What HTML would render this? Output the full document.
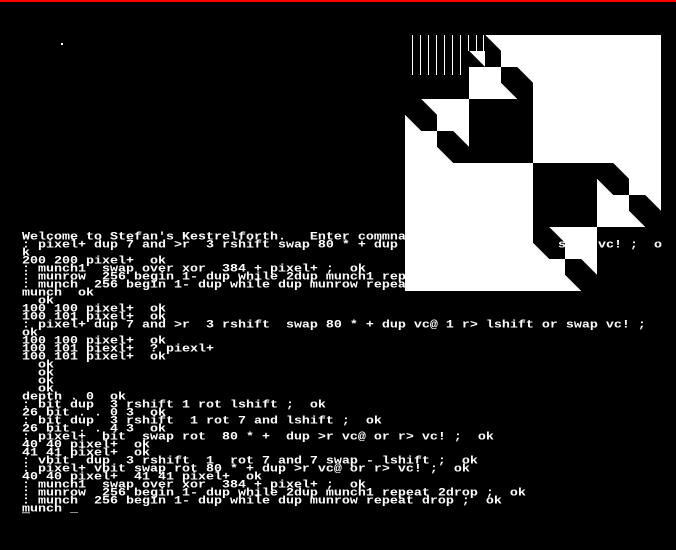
<!DOCTYPE html>
<html><head><meta charset="utf-8"><style>
html,body{margin:0;padding:0;background:#000;width:676px;height:550px;overflow:hidden;position:relative}
#red{position:absolute;left:0;top:0;width:676px;height:2px;background:#f00}
#t,.ov{position:absolute;margin:0;color:#fff;font-family:"Liberation Mono",monospace;font-weight:bold;font-size:13.33px;line-height:10px;letter-spacing:0;white-space:pre;transform:scaleY(0.8);transform-origin:0 0}
#t{left:22px;top:234px}
svg{position:absolute}
</style></head><body>
<div id="red"></div>
<div style="position:absolute;left:61px;top:43px;width:2px;height:2px;background:#fff"></div>
<pre id="t">Welcome to Stefan's Kestrelforth.   Enter commna
: pixel+ dup 7 and >r  3 rshift swap 80 * + dup
k
200 200 pixel+  ok
: munch1  swap over xor  384 + pixel+ ;  ok
: munrow  256 begin 1- dup while 2dup munch1 rep
: munch  256 begin 1- dup while dup munrow repea
munch  ok
  ok
100 100 pixel+  ok
100 101 pixel+  ok
: pixel+ dup 7 and >r  3 rshift  swap 80 * + dup vc@ 1 r> lshift or swap vc! ;
ok
100 100 pixel+  ok
100 101 piexl+  ? piexl+
100 101 pixel+  ok
  ok
  ok
  ok
  ok
depth . 0  ok
: bit dup  3 rshift 1 rot lshift ;  ok
26 bit . . 0 3  ok
: bit dup  3 rshift  1 rot 7 and lshift ;  ok
26 bit . . 4 3  ok
: pixel+  bit  swap rot  80 * +  dup >r vc@ or r> vc! ;  ok
40 40 pixel+  ok
41 41 pixel+  ok
: vbit  dup  3 rshift  1  rot 7 and 7 swap - lshift ;  ok
: pixel+ vbit swap rot 80 * + dup >r vc@ or r> vc! ;  ok
40 40 pixel+  41 41 pixel+  ok
: munch1  swap over xor  384 + pixel+ ;  ok
: munrow  256 begin 1- dup while 2dup munch1 repeat 2drop ;  ok
: munch  256 begin 1- dup while dup munrow repeat drop ;  ok
<u>m</u>unch _</pre>
<svg style="left:405px;top:35px" width="256" height="256" viewBox="0 0 16 16" shape-rendering="crispEdges">
<rect x="0" y="0" width="16" height="16" fill="#000"/>
<g fill="#fff">
<rect x="6" y="0" width="10" height="2"/>
<rect x="4" y="2" width="2" height="2"/><rect x="8" y="2" width="8" height="6"/>
<rect x="2" y="4" width="2" height="2"/>
<rect x="0" y="6" width="2" height="2"/>
<rect x="0" y="8" width="8" height="8"/>
<rect x="14" y="8" width="2" height="2"/>
<rect x="12" y="10" width="2" height="2"/>
<rect x="10" y="12" width="2" height="2"/>
<rect x="8" y="14" width="2" height="2"/>
<rect x="5" y="0" width="1" height="1"/><rect x="4" y="1" width="1" height="1"/>
<rect x="7" y="2" width="1" height="1"/><rect x="6" y="3" width="1" height="1"/>
<rect x="1" y="4" width="1" height="1"/><rect x="0" y="5" width="1" height="1"/>
<rect x="3" y="6" width="1" height="1"/><rect x="2" y="7" width="1" height="1"/>
<rect x="13" y="8" width="1" height="1"/><rect x="12" y="9" width="1" height="1"/>
<rect x="15" y="10" width="1" height="1"/><rect x="14" y="11" width="1" height="1"/>
<rect x="9" y="12" width="1" height="1"/><rect x="8" y="13" width="1" height="1"/>
<rect x="11" y="14" width="1" height="1"/><rect x="10" y="15" width="1" height="1"/>
</g>
<g fill="#000">
<polygon points="5,0 5,1 6,1"/><polygon points="4,1 4,2 5,2"/>
<polygon points="7,2 7,3 8,3"/><polygon points="6,3 7,3 7,4"/>
<polygon points="1,4 1,5 2,5"/><polygon points="0,5 1,5 1,6"/>
<polygon points="3,6 3,7 4,7"/><polygon points="2,7 3,7 3,8"/>
<polygon points="13,8 13,9 14,9"/><polygon points="12,9 13,9 13,10"/>
<polygon points="15,10 15,11 16,11"/><polygon points="14,11 15,11 15,12"/>
<polygon points="9,12 9,13 10,13"/><polygon points="8,13 9,13 9,14"/>
<polygon points="11,14 11,15 12,15"/><polygon points="10,15 11,15 11,16"/>
</g>
</svg>
<svg style="left:405px;top:35px" width="80" height="42" shape-rendering="crispEdges">
<g fill="#fff">
<rect x="7" y="0" width="1" height="40"/><rect x="15" y="0" width="1" height="40"/>
<rect x="23" y="0" width="1" height="40"/><rect x="31" y="0" width="1" height="40"/>
<rect x="39" y="0" width="1" height="40"/><rect x="47" y="0" width="1" height="40"/>
<rect x="55" y="0" width="1" height="40"/><rect x="63" y="0" width="1" height="16"/>
<rect x="71" y="0" width="1" height="16"/><rect x="78" y="0" width="1" height="16"/>
</g>
</svg>
<div class="ov" style="left:558px;top:242px">s</div>
<div class="ov" style="left:598px;top:242px">vc! ;  o</div>
</body></html>
